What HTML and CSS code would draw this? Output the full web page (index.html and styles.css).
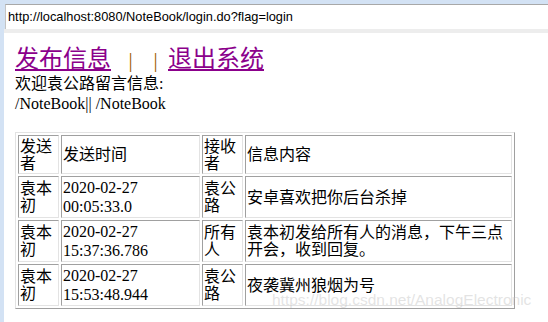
FILE: index.html
```html
<!DOCTYPE html>
<html lang="zh-CN">
<head>
  <meta charset="UTF-8">
  <title>留言信息</title>
  <link rel="stylesheet" href="styles.css">
</head>
<body>
  <div class="browser">
    <div class="titlebar"></div>
    <div class="addr">http://localhost:8080/NoteBook/login.do?flag=login</div>
    <div class="band"></div>
    <div class="view">
      <div class="nav">
        <a href="#">发布信息</a><span class="sep first">|</span><span class="sep">|</span><a href="#">退出系统</a>
      </div>
      <div class="welcome">欢迎袁公路留言信息:</div>
      <div class="path">/NoteBook|| /NoteBook</div>
      <!-- 留言列表 -->
      <table class="msg-table">
        <tr class="head">
          <th class="c-who">发送者</th>
          <th class="c-time">发送时间</th>
          <th class="c-who">接收者</th>
          <th class="c-text">信息内容</th>
        </tr>
        <tr>
          <td>袁本初</td>
          <td class="time">2020-02-27 00:05:33.0</td>
          <td>袁公路</td>
          <td>安卓喜欢把你后台杀掉</td>
        </tr>
        <tr>
          <td>袁本初</td>
          <td class="time">2020-02-27 15:37:36.786</td>
          <td>所有人</td>
          <td>袁本初发给所有人的消息，下午三点开会，收到回复。</td>
        </tr>
        <tr>
          <td>袁本初</td>
          <td class="time">2020-02-27 15:53:48.944</td>
          <td>袁公路</td>
          <td>夜袭冀州狼烟为号</td>
        </tr>
      </table>
    </div>
  </div>
  <div class="watermark">https://blog.csdn.net/AnalogElectronic</div>
</body>
</html>
```

FILE: styles.css
```css
body { margin: 0; background: #fff; font-family: "Liberation Serif", "Noto Sans CJK SC", serif; position: relative; }
.browser { display: flex; flex-direction: column; height: 322px; background: #d3e2f4; overflow: hidden; }
.titlebar { height: 4px; }
.addr { margin-left: 5px; height: 24px; line-height: 24px; padding-left: 2px; background: #fff; border-top: 1px solid #a8a8a8; border-left: 1px solid #c4c4c4; font-family: "Liberation Sans", Arial, sans-serif; font-size: 12.8px; color: #000; white-space: nowrap; }
.band { height: 4px; margin-left: 4px; background: #ededed; }
.view { flex: 1; margin-left: 4px; background: #fff; padding: 11px 0 0 11px; }
.nav { font-size: 24px; line-height: 30px; height: 30px; }
.nav a { color: #8b008b; text-decoration: underline; }
.sep { display: inline-block; width: 25px; text-align: center; font-size: 21px; color: #a05a00; }
.sep.first { margin-left: 7px; }
.welcome { font-size: 16px; line-height: 20px; }
.path { font-size: 16px; line-height: 20px; }
.msg-table { margin-top: 18px; width: 500px; table-layout: fixed; border-collapse: separate; border-spacing: 2px; border: 1px solid; border-color: #e3e3e3 #a0a0a0 #a0a0a0 #e3e3e3; font-size: 16px; }
.msg-table th, .msg-table td { box-sizing: border-box; padding: 1px; border: 1px solid; border-color: #a0a0a0 #e3e3e3 #e3e3e3 #a0a0a0; text-align: left; font-weight: normal; vertical-align: middle; line-height: 17px; }
.msg-table .head { height: 39px; }
.msg-table tr { height: 42px; }
.c-who { width: 41px; }
.c-time { width: 139px; }
.c-text { width: 267px; }
.msg-table td.time { line-height: 19px; }
/* 水印 */
.watermark { position: absolute; left: 272px; top: 289px; font-family: "Liberation Sans", Arial, sans-serif; font-size: 15.5px; line-height: 22px; color: rgba(200, 200, 200, 0.5); white-space: nowrap; pointer-events: none; }
```
